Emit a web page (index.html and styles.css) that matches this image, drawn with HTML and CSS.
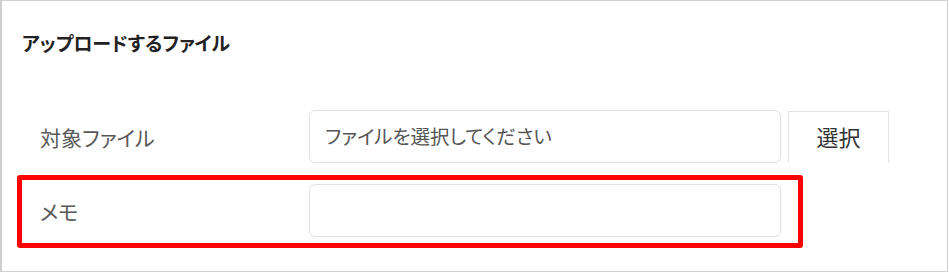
FILE: index.html
```html
<!DOCTYPE html>
<html lang="ja">
<head>
<meta charset="utf-8">
<title>アップロードするファイル</title>
<link rel="stylesheet" href="styles.css">
</head>
<body>
<section class="panel">
  <h2 class="title">アップロードするファイル</h2>
  <div class="form">
    <div class="row">
      <label class="label" for="file">対象ファイル</label>
      <input class="field" id="file" type="text" placeholder="ファイルを選択してください">
      <button class="select-btn" type="button">選択</button>
    </div>
    <div class="row row-highlight">
      <label class="label" for="memo">メモ</label>
      <input class="field" id="memo" type="text">
    </div>
  </div>
</section>
</body>
</html>
```

FILE: styles.css
```css
html, body {
  margin: 0;
  padding: 0;
  background: #ffffff;
}

body {
  font-family: "Noto Sans CJK JP", "Noto Sans", sans-serif;
  font-feature-settings: "palt";
  color: #333333;
}

.panel {
  box-sizing: border-box;
  width: 948px;
  height: 272px;
  border: 1px solid #cfcfcf;
  border-left-width: 2px;
  background: #ffffff;
}

.title {
  margin: 0;
  padding: 29px 0 0 20px;
  font-size: 19px;
  line-height: 26px;
  font-weight: 700;
  color: #222222;
}

.form {
  margin-top: 45px;
  padding-left: 15px;
  display: flex;
  flex-direction: column;
  gap: 1px;
  align-items: flex-start;
}

.row {
  display: flex;
  align-items: center;
  box-sizing: border-box;
  border: 5px solid transparent;
  padding: 4px 0 6px;
}

.row-highlight {
  width: 786px;
  border-color: #ff0000;
  border-radius: 3px;
  padding-right: 12px;
}

.label {
  flex: 0 0 287px;
  box-sizing: border-box;
  padding-left: 18px;
  font-size: 21px;
  color: #595959;
}

.field {
  box-sizing: border-box;
  width: 472px;
  height: 53px;
  margin: 0;
  padding: 0 0 2px 15px;
  border: 1px solid #e2e2e2;
  border-radius: 6px;
  background: #ffffff;
  font-family: inherit;
  font-feature-settings: "palt";
  font-size: 19.5px;
  color: #555555;
  outline: none;
}

.field::placeholder {
  color: #555555;
  opacity: 1;
}

.select-btn {
  align-self: flex-end;
  box-sizing: border-box;
  width: 101px;
  height: 52px;
  margin: 0 0 0 7px;
  padding: 0 0 4px;
  border: 1px solid #e4e4e4;
  border-bottom: none;
  background: #ffffff;
  font-family: inherit;
  font-feature-settings: "palt";
  font-size: 22px;
  color: #333333;
}
```
